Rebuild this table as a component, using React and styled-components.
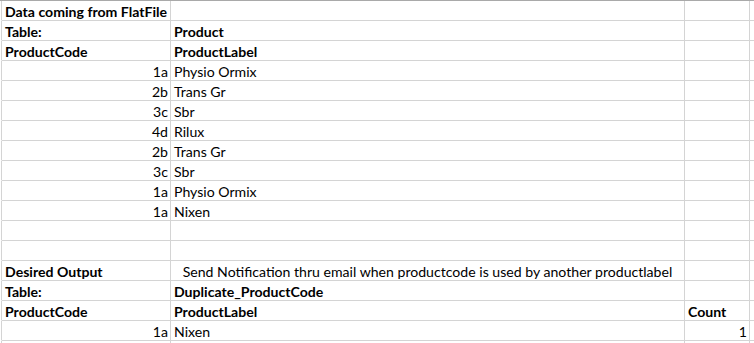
import React from "react";
import styled, { createGlobalStyle } from "styled-components";

const GlobalStyle = createGlobalStyle`
  html, body {
    margin: 0;
    padding: 0;
    background: #ffffff;
    overflow: hidden;
  }
`;

const rows = [
  [{ v: "Data coming from FlatFile", bold: true }, {}, {}],
  [{ v: "Table:", bold: true }, { v: "Product", bold: true }, {}],
  [{ v: "ProductCode", bold: true }, { v: "ProductLabel", bold: true }, {}],
  [{ v: "1a", align: "right" }, { v: "Physio Ormix" }, {}],
  [{ v: "2b", align: "right" }, { v: "Trans Gr" }, {}],
  [{ v: "3c", align: "right" }, { v: "Sbr" }, {}],
  [{ v: "4d", align: "right" }, { v: "Rilux" }, {}],
  [{ v: "2b", align: "right" }, { v: "Trans Gr" }, {}],
  [{ v: "3c", align: "right" }, { v: "Sbr" }, {}],
  [{ v: "1a", align: "right" }, { v: "Physio Ormix" }, {}],
  [{ v: "1a", align: "right" }, { v: "Nixen" }, {}],
  [{}, {}, {}],
  [{}, {}, {}],
  [
    { v: "Desired Output", bold: true },
    {
      v: "Send Notification thru email when productcode is used by another productlabel",
      align: "center",
    },
    {},
  ],
  [{ v: "Table:", bold: true }, { v: "Duplicate_ProductCode", bold: true }, {}],
  [
    { v: "ProductCode", bold: true },
    { v: "ProductLabel", bold: true },
    { v: "Count", bold: true },
  ],
  [{ v: "1a", align: "right" }, { v: "Nixen" }, { v: "1", align: "right" }],
  [{}, {}, {}],
];

const Sheet = styled.div`
  display: grid;
  grid-template-columns: 2px 169px 514px 65px 40px;
  grid-auto-rows: 20px;
  border-top: 1px solid #a9a9a9;
  width: max-content;
  font-family: Lato, "Liberation Sans", sans-serif;
  font-size: 14.1px;
  color: #000000;
`;

const Gutter = styled.div`
  border-right: 1px solid #d4d4d4;
  border-bottom: 1px solid transparent;
`;

const Cell = styled.div`
  box-sizing: border-box;
  border-right: 1px solid #d4d4d4;
  border-bottom: 1px solid #d4d4d4;
  padding: 1px ${(p) => (p.$align === "right" ? "2px" : "3px")} 0;
  line-height: 19px;
  white-space: nowrap;
  overflow: visible;
  text-align: ${(p) => p.$align || "left"};
  font-weight: ${(p) => (p.$bold ? 700 : 400)};
`;

export default function App() {
  return (
    <>
      <GlobalStyle />
      <Sheet>
        {rows.map((row, r) => (
          <React.Fragment key={r}>
            <Gutter />
            {row.map((cell, c) => (
              <Cell key={c} $align={cell.align} $bold={cell.bold}>
                {cell.v}
              </Cell>
            ))}
            <Cell />
          </React.Fragment>
        ))}
      </Sheet>
    </>
  );
}
